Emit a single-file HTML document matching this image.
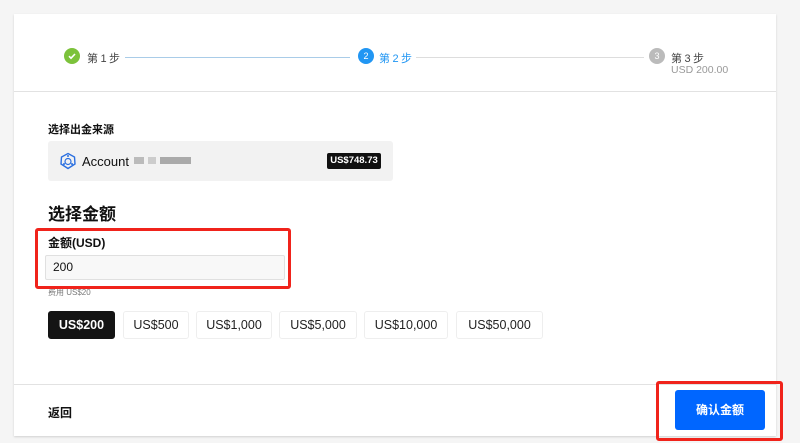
<!DOCTYPE html>
<html><head><meta charset="utf-8">
<style>
*{box-sizing:border-box;margin:0;padding:0}
body{width:800px;height:443px;background:#f5f5f5;font-family:"Liberation Sans","Noto Sans CJK SC",sans-serif;position:relative;overflow:hidden;color:#111}
.card{position:absolute;left:14px;top:14px;width:762px;height:422px;background:#fff;box-shadow:0 1px 2px rgba(0,0,0,.15)}
.a{position:absolute}
.circ{position:absolute;width:16px;height:16px;border-radius:50%;color:#fff;font-size:9px;text-align:center;line-height:16px}
.step{position:absolute;font-size:11px;color:#444;letter-spacing:-0.3px}
.line{position:absolute;height:1px;top:57px}
.btn{position:absolute;top:311px;height:28px;border:1px solid #eee;border-radius:3px;font-size:12.5px;text-align:center;line-height:26px;color:#222}
.red{position:absolute;border:3px solid #f0231b;border-radius:3px}
</style></head><body>
<div class="card"></div>
<div class="circ" style="left:64px;top:48px;background:#7cc23b"><svg width="16" height="16" viewBox="0 0 16 16"><path d="M5 8.2l2 2 4-4.2" stroke="#fff" stroke-width="1.6" fill="none"/></svg></div>
<div class="step" style="left:87px;top:50px">第 1 步</div>
<div class="line" style="left:125px;width:225px;background:#a9cce8"></div>
<div class="circ" style="left:358px;top:48px;background:#2196f3">2</div>
<div class="step" style="left:379px;top:50px;color:#2196f3">第 2 步</div>
<div class="line" style="left:416px;width:228px;background:#ddd"></div>
<div class="circ" style="left:649px;top:48px;background:#bbb">3</div>
<div class="step" style="left:671px;top:50px">第 3 步</div>
<div class="a" style="left:671px;top:64px;font-size:10.5px;color:#999">USD 200.00</div>
<div class="a" style="left:14px;top:91px;width:762px;height:1px;background:#e2e2e2"></div>

<div class="a" style="left:48px;top:121px;font-size:11px;font-weight:bold">选择出金来源</div>
<div class="a" style="left:48px;top:141px;width:345px;height:40px;background:#f2f2f2;border-radius:3px"></div>
<svg class="a" style="left:59px;top:152px" width="18" height="18" viewBox="0 0 18 18"><path d="M9 1.5L15.5 5 16 12 9 16.5 2 12 2.5 5Z" fill="none" stroke="#2a6fe0" stroke-width="1.4"/><circle cx="9" cy="9.5" r="3" fill="none" stroke="#2a6fe0" stroke-width="1.2"/><circle cx="5" cy="12" r="1" fill="#2a6fe0"/><circle cx="13" cy="12" r="1" fill="#2a6fe0"/><circle cx="9" cy="4" r="1" fill="#2a6fe0"/></svg>
<div class="a" style="left:82px;top:154px;font-size:13px">Account</div>
<div class="a" style="left:134px;top:157px;width:57px;height:7px;background:linear-gradient(90deg,#bbb 0 10px,transparent 10px 14px,#ccc 14px 22px,transparent 22px 26px,#aaa 26px 57px)"></div>
<div class="a" style="left:327px;top:153px;width:54px;height:16px;background:#111;border-radius:2px;color:#fff;font-size:9.5px;line-height:16px;text-align:center;font-weight:bold">US$748.73</div>

<div class="a" style="left:48px;top:200px;font-size:17px;font-weight:bold">选择金额</div>
<div class="a" style="left:48px;top:234px;font-size:12px;font-weight:bold">金额(USD)</div>
<div class="a" style="left:45px;top:255px;width:240px;height:25px;background:#f8f8f8;border:1px solid #e0e0e0;border-radius:2px;font-size:12px;line-height:23px;padding-left:7px">200</div>
<div class="a" style="left:48px;top:287px;font-size:8px;color:#777">费用 US$20</div>
<div class="btn" style="left:48px;width:67px;background:#141414;color:#fff;border-color:#141414;font-weight:bold">US$200</div>
<div class="btn" style="left:123px;width:66px">US$500</div>
<div class="btn" style="left:196px;width:76px">US$1,000</div>
<div class="btn" style="left:279px;width:78px">US$5,000</div>
<div class="btn" style="left:364px;width:84px">US$10,000</div>
<div class="btn" style="left:456px;width:87px">US$50,000</div>

<div class="a" style="left:14px;top:384px;width:762px;height:1px;background:#e2e2e2"></div>
<div class="a" style="left:48px;top:404px;font-size:12px;font-weight:bold">返回</div>
<div class="a" style="left:675px;top:390px;width:90px;height:40px;background:#0066ff;border-radius:3px;color:#fff;font-size:12px;font-weight:bold;text-align:center;line-height:40px">确认金额</div>

<div class="red" style="left:35px;top:228px;width:256px;height:61px"></div>
<div class="red" style="left:656px;top:381px;width:127px;height:60px"></div>
</body></html>
